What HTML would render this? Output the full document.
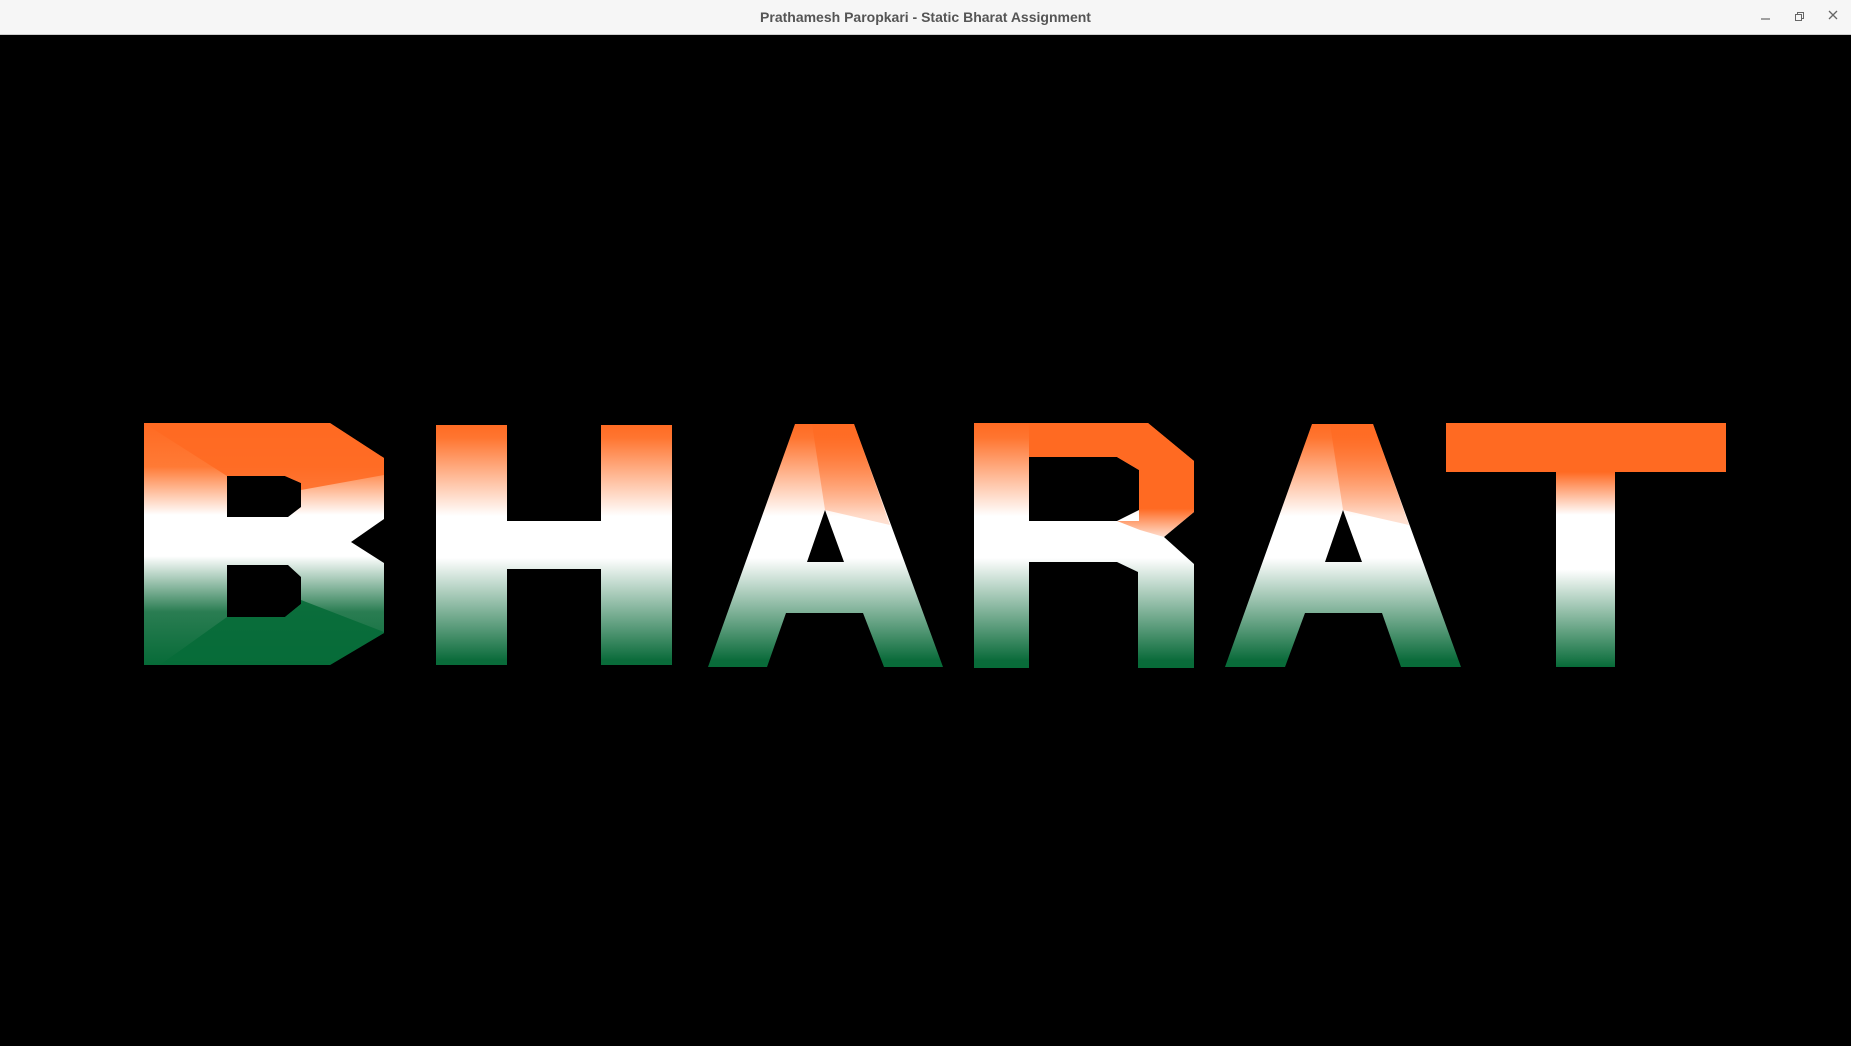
<!DOCTYPE html>
<html><head><meta charset="utf-8"><style>
html,body{margin:0;padding:0;width:1851px;height:1046px;overflow:hidden;background:#000}
.bar{position:absolute;left:0;top:0;width:1851px;height:35px;background:#f6f6f6;border-bottom:1px solid #cfcfcf;box-sizing:border-box}
.title{position:absolute;left:0;width:1851px;top:9px;text-align:center;font:bold 14px "Liberation Sans",sans-serif;color:#555}
svg{position:absolute;left:0;top:0}
</style></head><body>
<div class="bar"><div class="title">Prathamesh Paropkari - Static Bharat Assignment</div>
<svg width="1851" height="35" style="left:0;top:0">
<line x1="1761" y1="19" x2="1770" y2="19" stroke="#666" stroke-width="1.2"/>
<rect x="1795.5" y="14.5" width="6" height="6" fill="none" stroke="#666"/>
<path d="M1797.5 14.5V12.5H1803.5V18.5H1801.5" fill="none" stroke="#666"/>
<path d="M1829 11L1837 19M1837 11L1829 19" stroke="#666" stroke-width="1.3"/>
</svg></div>
<svg width="1851" height="1046" style="top:0">
<defs>
<linearGradient id="g" gradientUnits="userSpaceOnUse" x1="0" y1="423" x2="0" y2="668">
<stop offset="0" stop-color="#ff6a22"/><stop offset="0.06" stop-color="#ff7530"/>
<stop offset="0.38" stop-color="#fff"/><stop offset="0.55" stop-color="#fff"/>
<stop offset="0.97" stop-color="#0a6b3a"/><stop offset="1" stop-color="#076b38"/>
</linearGradient>
<linearGradient id="gb" gradientUnits="userSpaceOnUse" x1="0" y1="423" x2="0" y2="665">
<stop offset="0" stop-color="#ff6a22"/><stop offset="0.18" stop-color="#ff7a35"/>
<stop offset="0.38" stop-color="#fff"/><stop offset="0.55" stop-color="#fff"/>
<stop offset="0.78" stop-color="#2a7d52"/><stop offset="1" stop-color="#076b38"/>
</linearGradient>
<linearGradient id="gt" gradientUnits="userSpaceOnUse" x1="0" y1="472" x2="0" y2="667">
<stop offset="0" stop-color="#ff6a22"/><stop offset="0.22" stop-color="#fff"/>
<stop offset="0.5" stop-color="#fff"/><stop offset="1" stop-color="#076b38"/>
</linearGradient>
<linearGradient id="go" gradientUnits="userSpaceOnUse" x1="0" y1="423" x2="0" y2="545">
<stop offset="0" stop-color="#ff6a22"/><stop offset="0.7" stop-color="#ff6a22"/>
<stop offset="1" stop-color="#ff6a22" stop-opacity="0"/>
</linearGradient>
<linearGradient id="ga" gradientUnits="userSpaceOnUse" x1="0" y1="424" x2="0" y2="560">
<stop offset="0" stop-color="#ff6a22" stop-opacity="0.8"/><stop offset="0.4" stop-color="#ff6a22" stop-opacity="0.45"/>
<stop offset="1" stop-color="#ff6a22" stop-opacity="0"/>
</linearGradient>
</defs>
<path fill="url(#gb)" fill-rule="evenodd" d="M144 423H330L384 458V519L351 542L384 563V633L330 665H144Z M227 476H285L301 483V507L288 517H227Z M227 565H288L301 577V604L285 617H227Z"/>
<path fill="#ff6a22" opacity="0.85" d="M144 423H330L384 458V475L301 490V483L285 476H227Z"/>
<path fill="#076b38" opacity="0.9" d="M227 617H285L301 604V600L384 632V633L330 665H160Z"/>
<path fill="url(#g)" d="M436 425H507V521H601V425H672V665H601V569H507V665H436Z"/>
<path fill="url(#g)" fill-rule="evenodd" d="M795 424H854L943 667H884L863 613H786L767 667H708Z M825 510L844 562H807Z"/>
<path fill="url(#ga)" d="M812 424H854L890 525L825 510Z"/>
<path fill="url(#g)" fill-rule="evenodd" d="M974 423H1148L1194 461V512L1164 537L1194 564V668H1138V572L1117 562H1029V668H974Z M1029 457H1117L1139 470V510L1117 521H1029Z"/>
<path fill="url(#go)" d="M1029 423H1148L1194 461V512L1164 537L1140 530L1117 521H1139V470L1117 457H1029Z"/>
<path fill="url(#g)" fill-rule="evenodd" d="M1312 424H1373L1461 667H1401L1382 613H1305L1285 667H1225Z M1343 510L1362 562H1325Z"/>
<path fill="url(#ga)" d="M1330 424H1373L1409 525L1343 510Z"/>
<rect x="1446" y="423" width="280" height="49" fill="#ff6a22"/>
<rect x="1556" y="472" width="59" height="195" fill="url(#gt)"/>
</svg>
</body></html>
